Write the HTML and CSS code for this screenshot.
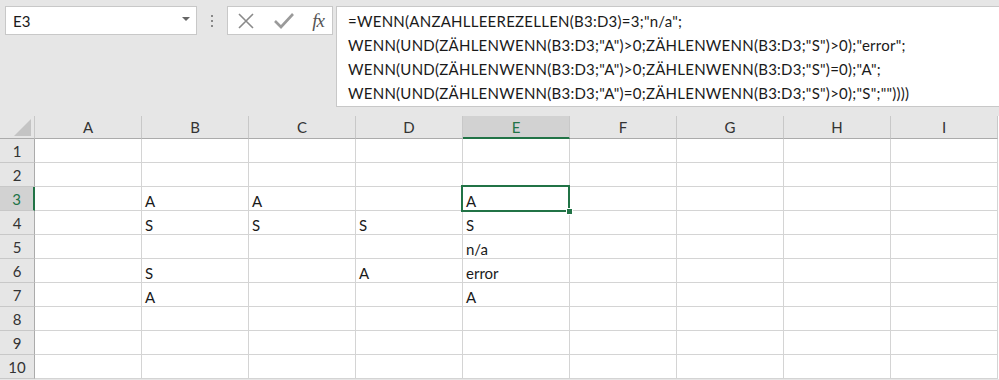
FILE: index.html
```html
<!DOCTYPE html>
<html>
<head>
<meta charset="utf-8">
<link rel="stylesheet" href="styles.css">
</head>
<body>
<div class="toolbar">
  <div class="namebox">
    <span class="name">E3</span>
    <svg class="dd" width="8" height="5" viewBox="0 0 8 5"><polygon points="0,0 8,0 4,4" fill="#666"/></svg>
  </div>
  <div class="grip"><span></span><span></span><span></span></div>
  <div class="fxbox">
    <svg width="20" height="20" viewBox="0 0 20 20"><path d="M3 3 L17 17 M17 3 L3 17" stroke="#8a8a8a" stroke-width="1.6" fill="none"/></svg>
    <svg width="22" height="20" viewBox="0 0 22 20"><path d="M2 10 L8 16 L20 3" stroke="#9a9a9a" stroke-width="2.6" fill="none"/></svg>
    <span class="fx">f<i>x</i></span>
  </div>
  <div class="formula">
    <div>=WENN(ANZAHLLEEREZELLEN(B3:D3)=3;"n/a";</div>
    <div>WENN(UND(ZÄHLENWENN(B3:D3;"A")&gt;0;ZÄHLENWENN(B3:D3;"S")&gt;0);"error";</div>
    <div>WENN(UND(ZÄHLENWENN(B3:D3;"A")&gt;0;ZÄHLENWENN(B3:D3;"S")=0);"A";</div>
    <div>WENN(UND(ZÄHLENWENN(B3:D3;"A")=0;ZÄHLENWENN(B3:D3;"S")&gt;0);"S";""))))</div>
  </div>
</div>
<div class="sheet">
  <div class="corner"><svg width="20" height="20" viewBox="0 0 20 20"><polygon points="20,3 20,20 3,20" fill="#c4c4c4"/></svg></div>
  <div class="ch">A</div><div class="ch">B</div><div class="ch">C</div><div class="ch">D</div><div class="ch sel">E</div><div class="ch">F</div><div class="ch">G</div><div class="ch">H</div><div class="ch">I</div>

  <div class="rh">1</div><div class="c"></div><div class="c"></div><div class="c"></div><div class="c"></div><div class="c"></div><div class="c"></div><div class="c"></div><div class="c"></div><div class="c"></div>
  <div class="rh">2</div><div class="c"></div><div class="c"></div><div class="c"></div><div class="c"></div><div class="c"></div><div class="c"></div><div class="c"></div><div class="c"></div><div class="c"></div>
  <div class="rh sel">3</div><div class="c"></div><div class="c">A</div><div class="c">A</div><div class="c"></div><div class="c">A</div><div class="c"></div><div class="c"></div><div class="c"></div><div class="c"></div>
  <div class="rh">4</div><div class="c"></div><div class="c">S</div><div class="c">S</div><div class="c">S</div><div class="c">S</div><div class="c"></div><div class="c"></div><div class="c"></div><div class="c"></div>
  <div class="rh">5</div><div class="c"></div><div class="c"></div><div class="c"></div><div class="c"></div><div class="c">n/a</div><div class="c"></div><div class="c"></div><div class="c"></div><div class="c"></div>
  <div class="rh">6</div><div class="c"></div><div class="c">S</div><div class="c"></div><div class="c">A</div><div class="c">error</div><div class="c"></div><div class="c"></div><div class="c"></div><div class="c"></div>
  <div class="rh">7</div><div class="c"></div><div class="c">A</div><div class="c"></div><div class="c"></div><div class="c">A</div><div class="c"></div><div class="c"></div><div class="c"></div><div class="c"></div>
  <div class="rh">8</div><div class="c"></div><div class="c"></div><div class="c"></div><div class="c"></div><div class="c"></div><div class="c"></div><div class="c"></div><div class="c"></div><div class="c"></div>
  <div class="rh">9</div><div class="c"></div><div class="c"></div><div class="c"></div><div class="c"></div><div class="c"></div><div class="c"></div><div class="c"></div><div class="c"></div><div class="c"></div>
  <div class="rh">10</div><div class="c"></div><div class="c"></div><div class="c"></div><div class="c"></div><div class="c"></div><div class="c"></div><div class="c"></div><div class="c"></div><div class="c"></div>

  <div class="selection"><span class="handle"></span></div>
</div>
</body>
</html>
```
FILE: styles.css
```css
* { box-sizing: border-box; }
html, body { margin: 0; padding: 0; }
body {
  width: 999px;
  height: 380px;
  overflow: hidden;
  background: #e6e6e6;
  font-family: Lato, "Liberation Sans", sans-serif;
  font-size: 15px;
  color: #1a1a1a;
}
.toolbar {
  display: flex;
  align-items: flex-start;
  height: 116px;
  padding: 6px 0 0 5px;
}
.namebox {
  width: 192px;
  height: 29px;
  background: #fff;
  border: 1px solid #c8c8c8;
  display: flex;
  align-items: center;
  justify-content: space-between;
  padding: 0 6px 0 7px;
}
.namebox .dd { margin-top: -2px; }
.grip {
  width: 30px;
  height: 29px;
  display: flex;
  flex-direction: column;
  align-items: center;
  justify-content: center;
  gap: 3px;
}
.grip span { width: 2px; height: 2px; background: #888; }
.fxbox {
  width: 106px;
  height: 29px;
  background: #fff;
  border: 1px solid #c8c8c8;
  display: flex;
  align-items: center;
  justify-content: space-between;
  padding: 0 8px 0 8px;
}
.fx {
  font-family: "Liberation Serif", serif;
  font-style: italic;
  font-size: 19px;
  color: #555;
  letter-spacing: -1px;
}
.fx i { font-style: italic; }
.formula {
  margin-left: 3px;
  flex: 1;
  height: 101px;
  background: #fff;
  border: 1px solid #c8c8c8;
  border-right: none;
  padding: 2px 0 0 11px;
  line-height: 24px;
  letter-spacing: 0.25px;
  white-space: nowrap;
}
.sheet {
  position: relative;
  display: grid;
  grid-template-columns: 35px repeat(9, 107px);
  grid-template-rows: 23px repeat(10, 24px);
  background: #fff;
}
.corner {
  background: #e6e6e6;
  border-right: 1px solid #c8c8c8;
  border-bottom: 1px solid #ababab;
  display: flex;
  align-items: flex-end;
  justify-content: flex-end;
  padding: 0 3px 2px 0;
}
.ch {
  background: #e6e6e6;
  border-right: 1px solid #c8c8c8;
  border-bottom: 1px solid #ababab;
  text-align: center;
  line-height: 22px;
  color: #333;
}
.ch.sel {
  background: #d2d2d2;
  color: #217346;
  border-bottom: 2px solid #217346;
}
.rh {
  background: #e6e6e6;
  border-right: 1px solid #ababab;
  border-bottom: 1px solid #c8c8c8;
  text-align: center;
  line-height: 24px;
  color: #333;
}
.rh.sel {
  background: #d2d2d2;
  color: #217346;
  border-right: 2px solid #217346;
}
.c {
  border-right: 1px solid #d4d4d4;
  border-bottom: 1px solid #d4d4d4;
  padding: 4px 0 0 3px;
  line-height: 20px;
  white-space: nowrap;
}
.selection {
  position: absolute;
  left: 461px;
  top: 69px;
  width: 109px;
  height: 27px;
  border: 2px solid #217346;
  pointer-events: none;
}
.handle {
  position: absolute;
  right: -5px;
  bottom: -5px;
  width: 7px;
  height: 7px;
  background: #217346;
  border: 1px solid #fff;
}
```
